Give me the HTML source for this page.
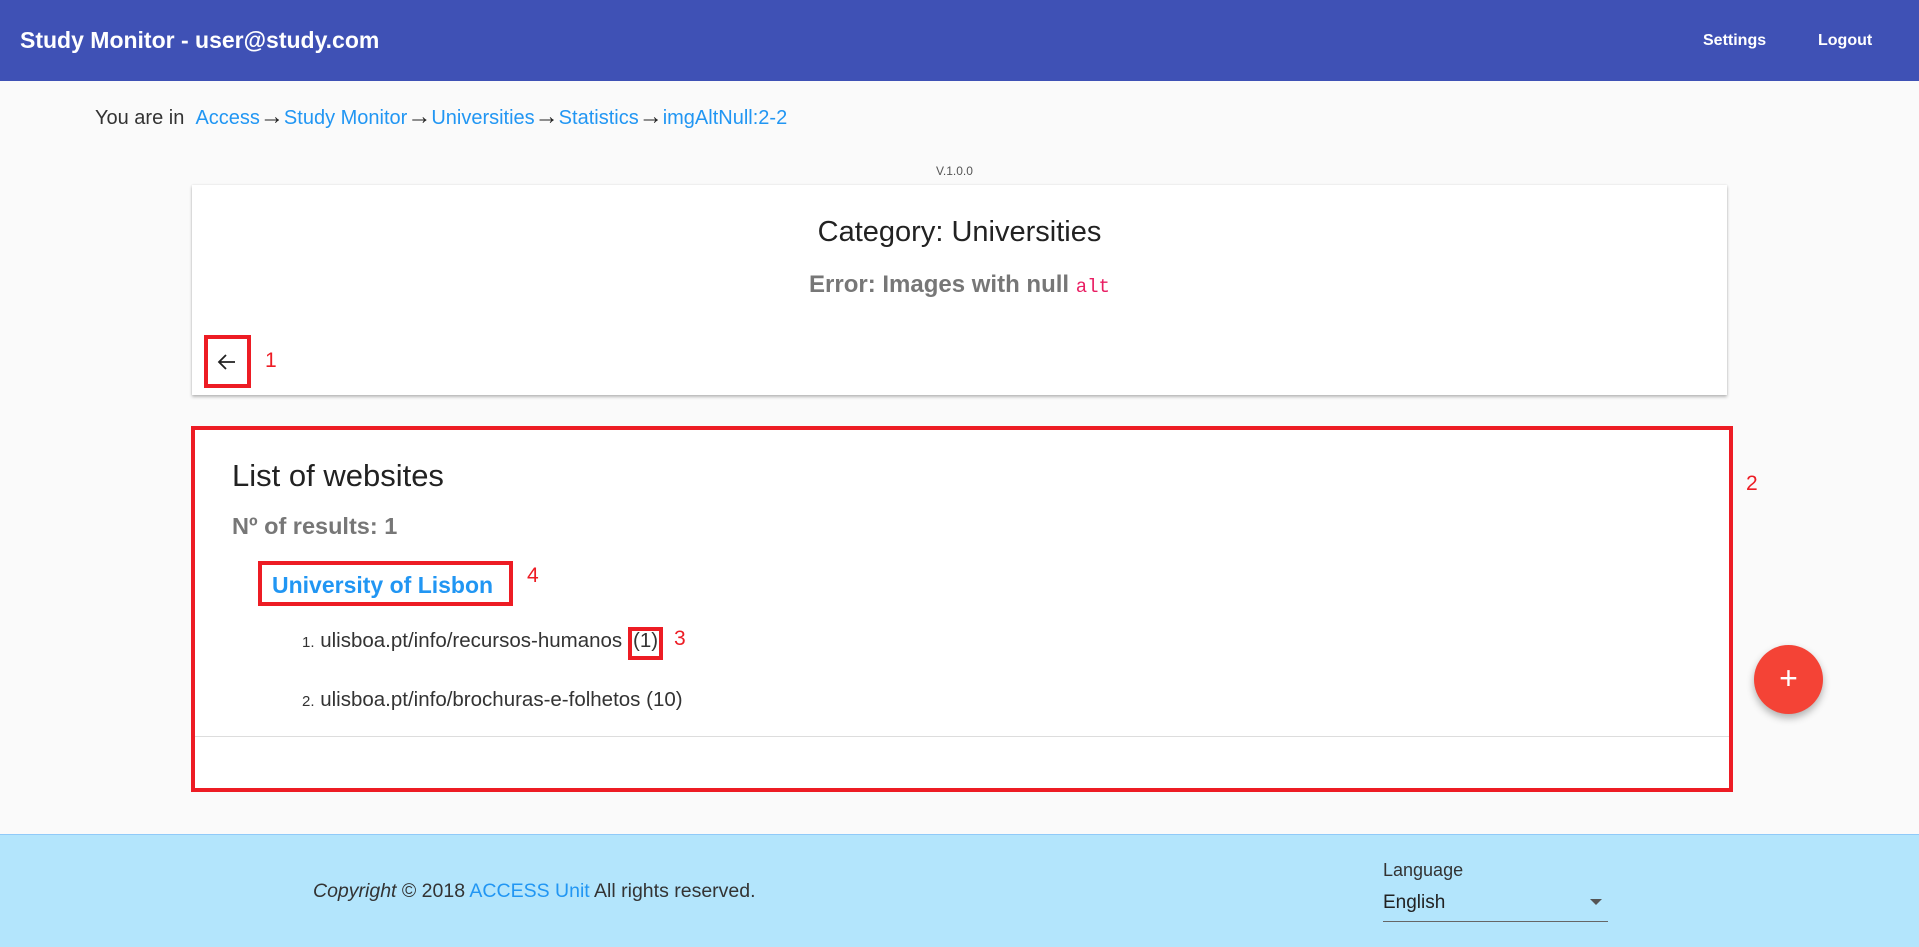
<!DOCTYPE html>
<html><head><meta charset="utf-8"><style>
*{box-sizing:border-box;margin:0;padding:0}
body{width:1919px;height:947px;background:#fafafa;font-family:"Liberation Sans",sans-serif;position:relative;overflow:hidden;color:#212121}
.abs{position:absolute;white-space:nowrap}
header{position:absolute;left:0;top:0;width:1919px;height:81px;background:#3f51b5;color:#fff}
.blue{color:#2196f3}
.red{color:#ed1c24}
.card{position:absolute;background:#fff;box-shadow:0 2px 3px rgba(0,0,0,.25),0 0 2px rgba(0,0,0,.1)}
.rbox{position:absolute;border:4px solid #ed1c24}
</style></head><body>
<header>
<div class="abs" style="left:20px;top:27px;font-size:23px;font-weight:bold">Study Monitor - user@study.com</div>
<div class="abs" style="left:1703px;top:32px;font-size:16px;font-weight:bold">Settings</div>
<div class="abs" style="left:1818px;top:32px;font-size:16px;font-weight:bold">Logout</div>
</header>
<div class="abs" style="left:95px;top:103px;font-size:20px;color:#333">You are in &nbsp;<span class="blue">Access</span><span style="font-size:24px;color:#222">→</span><span class="blue">Study Monitor</span><span style="font-size:24px;color:#222">→</span><span class="blue">Universities</span><span style="font-size:24px;color:#222">→</span><span class="blue">Statistics</span><span style="font-size:24px;color:#222">→</span><span class="blue">imgAltNull:2-2</span></div>
<div class="abs" style="left:936px;top:164px;font-size:12px;color:#555">V.1.0.0</div>
<div class="card" style="left:192px;top:185px;width:1535px;height:210px"></div>
<div class="abs" style="left:0;width:1919px;text-align:center;top:216px;font-size:29px;color:#222">Category: Universities</div>
<div class="abs" style="left:0;width:1919px;text-align:center;top:271px;font-size:24px;color:#777;font-weight:bold">Error: Images with null <span style="font-family:'Liberation Mono',monospace;color:#e91e63;font-weight:normal;font-size:19px">alt</span></div>
<div class="rbox" style="left:204px;top:335px;width:47px;height:53px"></div>
<svg class="abs" style="left:215px;top:350px" width="24" height="24" viewBox="0 0 24 24"><path d="M20 12H5M11 5l-7 7 7 7" fill="none" stroke="#222" stroke-width="1.8"/></svg>
<div class="abs red" style="left:265px;top:349px;font-size:21px">1</div>
<div style="position:absolute;left:191px;top:426px;width:1542px;height:366px;background:#fff"></div>
<div style="position:absolute;left:195px;top:736px;width:1534px;height:1px;background:#ddd"></div>
<div class="rbox" style="left:191px;top:426px;width:1542px;height:366px"></div>
<div class="abs red" style="left:1746px;top:472px;font-size:21px">2</div>
<div class="abs" style="left:232px;top:458px;font-size:31px;color:#222">List of websites</div>
<div class="abs" style="left:232px;top:513px;font-size:23.5px;color:#777;font-weight:bold">Nº of results: 1</div>
<div class="rbox" style="left:258px;top:561px;width:255px;height:45px"></div>
<div class="abs blue" style="left:272px;top:572px;font-size:23px;font-weight:bold">University of Lisbon</div>
<div class="abs red" style="left:527px;top:564px;font-size:21px">4</div>
<div class="abs" style="left:302px;top:629px;font-size:20.5px;color:#333"><span style="font-size:15px">1.</span> ulisboa.pt/info/recursos-humanos</div>
<div class="abs" style="left:633px;top:629px;font-size:20.5px;color:#333">(1)</div>
<div class="rbox" style="left:628px;top:627px;width:35px;height:33px"></div>
<div class="abs red" style="left:674px;top:627px;font-size:21px">3</div>
<div class="abs" style="left:302px;top:688px;font-size:20.5px;color:#333"><span style="font-size:15px">2.</span> ulisboa.pt/info/brochuras-e-folhetos (10)</div>
<div style="position:absolute;left:1754px;top:645px;width:69px;height:69px;border-radius:50%;background:#f44336;box-shadow:0 4px 8px rgba(0,0,0,.3);color:#fff;font-size:32px;text-align:center;line-height:67px">+</div>
<div style="position:absolute;left:0;top:834px;width:1919px;height:113px;background:#b3e5fc;border-top:1px solid #90caf9"></div>
<div class="abs" style="left:313px;top:880px;font-size:19.5px;color:#333"><i>Copyright</i> © 2018 <span class="blue">ACCESS Unit</span> All rights reserved.</div>
<div class="abs" style="left:1383px;top:860px;font-size:18px;color:#333">Language</div>
<div class="abs" style="left:1383px;top:892px;font-size:19px;color:#222">English</div>
<div class="abs" style="left:1590px;top:899px;width:0;height:0;border-left:6px solid transparent;border-right:6px solid transparent;border-top:6px solid #555"></div>
<div style="position:absolute;left:1383px;top:921px;width:225px;height:1px;background:#666"></div>
</body></html>
